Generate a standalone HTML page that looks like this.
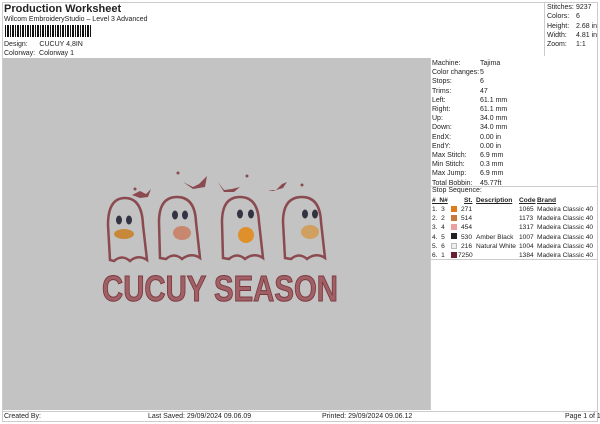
<!DOCTYPE html>
<html><head><style>
*{margin:0;padding:0;box-sizing:border-box}
body{width:600px;height:424px;background:#fff;font-family:"Liberation Sans",sans-serif;color:#222;position:relative;overflow:hidden;font-size:7px}
.a{position:absolute;white-space:nowrap}
</style></head><body>
<div style="position:absolute;left:2px;top:2px;width:596px;height:420px;border:1px solid #ccc"></div>
<div class="a" style="left:4px;top:3px;font-size:11px;font-weight:bold">Production Worksheet</div>
<div class="a" style="left:4px;top:16px;font-size:7px">Wilcom EmbroideryStudio – Level 3 Advanced</div>
<div class="a" style="left:5px;top:25px;width:87px;height:12px;background:repeating-linear-gradient(90deg,#111 0 1px,#fff 1px 2px,#111 2px 4px,#fff 4px 5px)"></div>
<div class="a" style="left:4px;top:41px">Design:&nbsp;&nbsp;&nbsp;&nbsp;&nbsp;&nbsp;CUCUY 4,8IN</div>
<div class="a" style="left:4px;top:50px">Colorway:&nbsp;&nbsp;Colorway 1</div>
<div class="a" style="left:544px;top:2px;width:54px;height:54px;border-left:1px solid #ccc"></div>
<div class="a" style="left:547px;top:3px;line-height:9.3px">Stitches:<br>Colors:<br>Height:<br>Width:<br>Zoom:</div>
<div class="a" style="left:576px;top:3px;line-height:9.3px">9237<br>6<br>2.68 in<br>4.81 in<br>1:1</div>
<div class="a" style="left:3px;top:58px;width:427px;height:352px;background:#c3c3c3"></div>
<div class="a" style="left:430px;top:58px;width:1px;height:352px;background:#ccc"></div>
<div class="a" style="left:432px;top:59px;line-height:9.2px">Machine:<br>Color changes:<br>Stops:<br>Trims:<br>Left:<br>Right:<br>Up:<br>Down:<br>EndX:<br>EndY:<br>Max Stitch:<br>Min Stitch:<br>Max Jump:<br>Total Bobbin:</div>
<div class="a" style="left:480px;top:59px;line-height:9.2px">Tajima<br>5<br>6<br>47<br>61.1 mm<br>61.1 mm<br>34.0 mm<br>34.0 mm<br>0.00 in<br>0.00 in<br>6.9 mm<br>0.3 mm<br>6.9 mm<br>45.77ft</div>
<div class="a" style="left:430px;top:186px;width:168px;height:1px;background:#ccc"></div>
<div class="a" style="left:432px;top:187px">Stop Sequence:</div>
<div class="a" style="left:432px;top:196px;line-height:9.2px;width:166px;height:60px;font-size:6.6px">
<div class="a" style="left:0;top:0;font-weight:bold;text-decoration:underline">#&nbsp;&nbsp;N#</div>
<div class="a" style="left:32px;top:0;font-weight:bold;text-decoration:underline">St.</div>
<div class="a" style="left:44px;top:0;font-weight:bold;text-decoration:underline">Description</div>
<div class="a" style="left:87px;top:0;font-weight:bold;text-decoration:underline">Code</div>
<div class="a" style="left:105px;top:0;font-weight:bold;text-decoration:underline">Brand</div>
<div class="a" style="left:0;top:9px">1.&nbsp;&nbsp;3<br>2.&nbsp;&nbsp;2<br>3.&nbsp;&nbsp;4<br>4.&nbsp;&nbsp;5<br>5.&nbsp;&nbsp;6<br>6.&nbsp;&nbsp;1</div>
<div class="a" style="left:19px;top:10px;width:6px;height:6px;background:#e07a1e"></div>
<div class="a" style="left:19px;top:19px;width:6px;height:6px;background:#c8783a"></div>
<div class="a" style="left:19px;top:28px;width:6px;height:6px;background:#e8a0a0"></div>
<div class="a" style="left:19px;top:37px;width:6px;height:6px;background:#222"></div>
<div class="a" style="left:19px;top:47px;width:6px;height:6px;background:#eee;border:1px solid #bbb"></div>
<div class="a" style="left:19px;top:56px;width:6px;height:6px;background:#6a2030"></div>
<div class="a" style="left:26px;top:9px;text-align:right;width:14px">271<br>514<br>454<br>530<br>216<br>7250</div>
<div class="a" style="left:44px;top:9px"><br><br><br>Amber Black<br>Natural White</div>
<div class="a" style="left:87px;top:9px">1065<br>1173<br>1317<br>1007<br>1004<br>1384</div>
<div class="a" style="left:105px;top:9px">Madeira Classic 40<br>Madeira Classic 40<br>Madeira Classic 40<br>Madeira Classic 40<br>Madeira Classic 40<br>Madeira Classic 40</div>
</div>
<div class="a" style="left:430px;top:259px;width:168px;height:1px;background:#ccc"></div>
<div class="a" style="left:2px;top:411px;width:596px;height:1px;background:#ccc"></div>
<div class="a" style="left:4px;top:413px">Created By:</div>
<div class="a" style="left:148px;top:413px">Last Saved: 29/09/2024 09.06.09</div>
<div class="a" style="left:322px;top:413px">Printed: 29/09/2024 09.06.12</div>
<div class="a" style="left:565px;top:413px">Page 1 of 1</div>
<svg class="a" style="left:0;top:0" width="600" height="424">
<g fill="none" stroke="#8a4a50" stroke-width="2.5">
<path d="M110 260 L108 225 Q108 198 125 198 Q142 198 143 225 L147 260 Q138 254 130 261 Q122 254 114 261 Z"/>
<path d="M160 258 L159 222 Q159 197 177 197 Q195 197 196 222 L200 258 Q191 252 182 259 Q174 252 166 259 Z"/>
<path d="M223 258 L222 222 Q222 197 240 197 Q258 197 259 222 L263 258 Q254 252 245 259 Q237 252 229 259 Z"/>
<path d="M285 258 L283 222 Q283 197 302 197 Q320 197 321 222 L325 258 Q316 252 307 259 Q299 252 291 259 Z"/>
</g>
<g fill="#334"><ellipse cx="119" cy="220" rx="3" ry="4.5"/><ellipse cx="129" cy="220" rx="3" ry="4.5"/>
<ellipse cx="175" cy="215" rx="3" ry="4.5"/><ellipse cx="185" cy="215" rx="3" ry="4.5"/>
<ellipse cx="240" cy="214" rx="3" ry="4.5"/><ellipse cx="251" cy="214" rx="3" ry="4.5"/>
<ellipse cx="305" cy="214" rx="3" ry="4.5"/><ellipse cx="315" cy="214" rx="3" ry="4.5"/></g>
<ellipse cx="124" cy="234" rx="10" ry="5" fill="#c8883a"/>
<ellipse cx="182" cy="233" rx="9" ry="7" fill="#c88870"/>
<ellipse cx="246" cy="235" rx="8" ry="8" fill="#e0902a"/>
<ellipse cx="310" cy="232" rx="9" ry="7" fill="#d0a060"/>
<g fill="#8a4a50"><path d="M132 195 l8-4 6 3 5-5 -3 8 -8 1z"/><path d="M183 182 l10 5 6-3 8-8 -2 11 -12 2z"/><path d="M218 182 l6 8 8-1 8-2 -6 5 -10 0z"/><path d="M268 190 l8 0 6-6 5 -2 -4 6 -10 3z"/>
<circle cx="135" cy="189" r="1.5"/><circle cx="178" cy="173" r="1.5"/><circle cx="247" cy="176" r="1.5"/><circle cx="302" cy="185" r="1.5"/></g>
<text x="220" y="301" text-anchor="middle" font-family="Liberation Sans" font-weight="bold" font-size="36" fill="#a06066" stroke="#7a3a40" stroke-width="1" textLength="236" lengthAdjust="spacingAndGlyphs">CUCUY SEASON</text>
</svg>
</body></html>
